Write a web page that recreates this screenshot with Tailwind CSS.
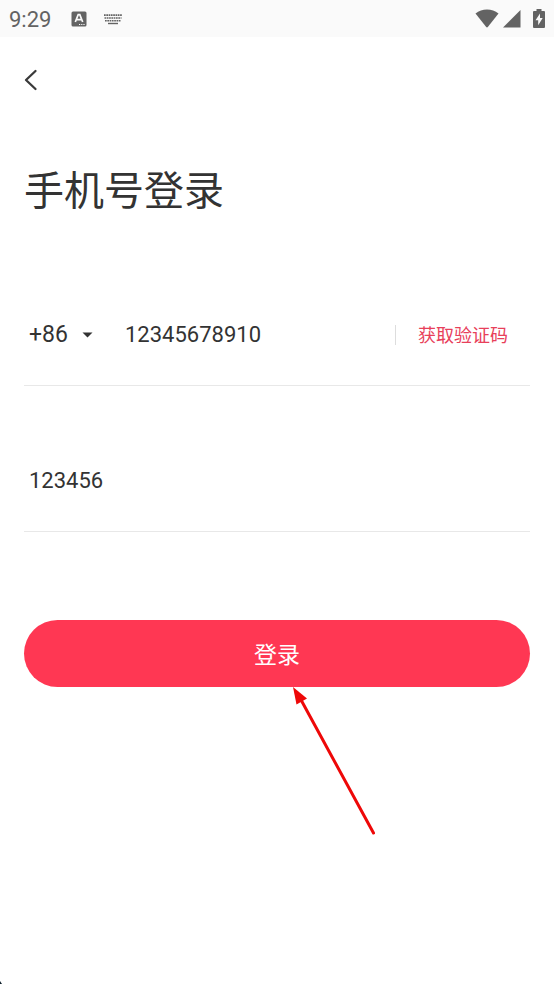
<!DOCTYPE html>
<html lang="zh-CN">
<head>
<meta charset="utf-8">
<meta name="viewport" content="width=device-width, initial-scale=1">
<title>手机号登录</title>
<script src="https://cdn.jsdelivr.net/npm/@tailwindcss/browser@4"></script>
</head>
<body class="relative min-h-screen bg-white font-['Roboto','Noto_Sans_CJK_SC',sans-serif] text-[#333333]">

  <!-- Status bar -->
  <header class="flex h-[37px] items-center bg-[#fafafa] px-[9px] text-[#636363]">
    <time class="pt-0.5 text-[22px] leading-9">9:29</time>
    <svg class="ml-5 h-4 w-4" viewBox="0 0 16 16" aria-hidden="true">
      <rect x="0.5" y="0.5" width="15" height="15" rx="1.5" fill="currentColor"/>
      <path d="M4.3 11 7.2 3.6h1.6L11.7 11M5.4 8.6h5.2" fill="none" stroke="#fafafa" stroke-width="1.7"/>
      <path d="M8 13.5h1.2M10.2 13.5h1.2M12.4 13.5h1.2" stroke="#fafafa" stroke-width="1.2"/>
    </svg>
    <svg class="ml-4 h-3 w-5" viewBox="0 0 20 12" fill="none" stroke="currentColor" aria-hidden="true">
      <path d="M1 2.2h18" stroke-width="1.7" stroke-dasharray="1.7 0.6"/>
      <path d="M1.5 5h17" stroke-width="1.7" stroke-dasharray="1.7 0.6"/>
      <path d="M2 7.7h16" stroke-width="1.5" stroke-dasharray="1.7 0.6"/>
      <path d="M5 10.5h10" stroke-width="1.4"/>
    </svg>
    <svg class="ml-auto h-5 w-6" viewBox="0 0 24 20" fill="currentColor" aria-hidden="true">
      <path d="M0.500 4.500Q5.500 0.500 12 0.500T23.500 4.500L13 17.800Q12 19 11 17.800Z"/>
    </svg>
    <svg class="ml-[3px] h-5 w-5" viewBox="0 0 20 20" fill="currentColor" aria-hidden="true">
      <path d="M18.500 1v17.500H1Z"/>
    </svg>
    <svg class="ml-[11px] h-5 w-3" viewBox="0 0 12 20" aria-hidden="true">
      <path d="M3.500 0h5v2H11q1 0 1 1v15q0 1-1 1H1q-1 0-1-1V3q0-1 1-1h2.500Z" fill="currentColor"/>
      <path d="M7 4.500 2.500 11.200h2.700v5L9.700 9H7Z" fill="#fafafa"/>
    </svg>
  </header>

  <main class="px-6">
    <button type="button" aria-label="返回" class="mt-7 flex h-[30px] w-[30px] items-center">
      <svg class="h-6 w-4" viewBox="0 0 16 24" fill="none" stroke="#3a3a3a" stroke-width="2.3" stroke-linecap="round" stroke-linejoin="round" aria-hidden="true">
        <path d="M11.500 3 2 12l9.500 9"/>
      </svg>
    </button>

    <h1 class="mt-[67px] text-[40px] leading-[60px]">手机号登录</h1>

    <form class="mt-16">
      <div class="flex h-[100px] items-center border-b border-[#e8e8e8] pb-0.5">
        <div class="relative w-[101px] shrink-0">
          <select aria-label="国家或地区代码" class="w-[72px] appearance-none bg-transparent pl-[5px] text-[23px] leading-8 outline-none">
            <option>+86</option>
          </select>
          <svg class="pointer-events-none absolute left-[58px] top-1/2 h-[6px] w-[11px] -translate-y-1/2" viewBox="0 0 11 6" fill="#333333" aria-hidden="true">
            <path d="M0.500 0.500h10L5.500 5.500Z"/>
          </svg>
        </div>
        <input type="tel" aria-label="手机号" value="12345678910" class="min-w-0 flex-1 bg-transparent text-[22px] leading-8 outline-none">
        <button type="button" class="flex items-center pr-[22px] text-[18px] leading-8 text-[#e8405a]">
          <span class="mr-[22px] h-5 w-px bg-[#dddddd]"></span><span class="pt-0.5">获取验证码</span>
        </button>
      </div>

      <div class="mt-[46px] flex h-[100px] items-center border-b border-[#e8e8e8] pb-0.5">
        <input type="text" inputmode="numeric" aria-label="验证码" value="123456" class="min-w-0 flex-1 bg-transparent pl-[5px] text-[22px] leading-8 outline-none">
      </div>

      <div class="relative mt-[88px]">
        <button type="button" class="h-[67px] w-full rounded-full bg-[#ff3753] pt-1 text-[23px] leading-8 text-white">登录</button>
        <svg class="pointer-events-none absolute left-[calc(50%+13px)] top-16 h-[152px] w-[90px]" viewBox="0 0 90 152" aria-hidden="true">
          <path d="M10 14 83.500 149" stroke="#ee0808" stroke-width="3" stroke-linecap="round"/>
          <path d="M3 3 17 14.500 6.500 20.500Z" fill="#ee0808"/>
        </svg>
      </div>
    </form>
  </main>

  <svg class="absolute bottom-0 left-0 h-1 w-1" viewBox="0 0 4 4" aria-hidden="true">
    <path d="M0 1 2 4H0Z" fill="#10202c"/>
  </svg>
</body>
</html>
